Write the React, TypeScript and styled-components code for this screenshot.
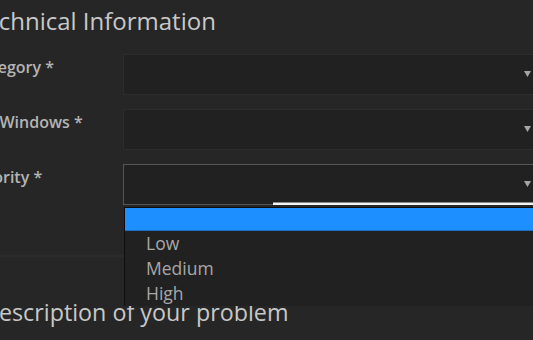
import React from "react";
import styled, { createGlobalStyle } from "styled-components";

const GlobalStyle = createGlobalStyle`
  html, body {
    margin: 0;
    padding: 0;
    background: #262626;
    overflow: hidden;
  }
  body {
    font-family: "Open Sans", "Noto Sans", sans-serif;
  }
`;

const Page = styled.div`
  width: 620px;
  margin-left: -28px;
  display: flex;
  flex-direction: column;
`;

const Heading = styled.h2`
  margin: 0;
  padding-top: 3px;
  font-size: 24px;
  font-weight: 400;
  line-height: 36px;
  color: #c8c8c8;
  height: 54px;
  box-sizing: border-box;
`;

const Fields = styled.div`
  display: flex;
  flex-direction: column;
  gap: 14px;
`;

const Row = styled.div`
  display: flex;
  align-items: flex-start;
`;

const Label = styled.label`
  width: 151px;
  flex: none;
  padding-top: 2px;
  font-size: 16px;
  font-weight: 600;
  line-height: 22px;
  color: #b4b4b4;
`;

const SelectBox = styled.div<{ $focused?: boolean }>`
  position: relative;
  flex: none;
  width: 416px;
  height: 41px;
  box-sizing: border-box;
  background: #212121;
  border: 1px solid ${(p) => (p.$focused ? "#555" : "#2c2c2c")};
`;

const Arrow = styled.svg`
  position: absolute;
  right: 7px;
  top: 16px;
`;

const FocusLine = styled.div`
  position: absolute;
  left: 149px;
  right: -2px;
  bottom: -1px;
  height: 2px;
  background: #f4f4f4;
  border-top: 1px solid #888;
`;

const Menu = styled.ul`
  position: absolute;
  top: 42px;
  left: 0;
  right: -1px;
  margin: 0;
  padding: 0;
  list-style: none;
  background: #212121;
  border-left: 1px solid #0e0e0e;
  border-top: 1px solid #0e0e0e;
  z-index: 2;
`;

const Option = styled.li<{ $active?: boolean }>`
  height: ${(p) => (p.$active ? "22px" : "25px")};
  padding-left: 21px;
  font-size: 17.5px;
  line-height: 25px;
  color: #a8a8a8;
  background: ${(p) => (p.$active ? "#1e8fff" : "transparent")};
  border-bottom: ${(p) => (p.$active ? "1px solid #1b6fc4" : "none")};
`;

const Divider = styled.hr`
  margin: 50px 0 0;
  border: none;
  border-top: 2px solid #2b2b2b;
`;

const SubHeading = styled.h2`
  margin: 37px 0 0 10px;
  font-size: 23.3px;
  font-weight: 400;
  line-height: 36px;
  color: #c8c8c8;
`;

function DownArrow() {
  return (
    <Arrow width="7" height="6" viewBox="0 0 7 6">
      <path d="M0 0 H7 L3.5 6 Z" fill="#a5a5a5" />
    </Arrow>
  );
}

export default function App() {
  return (
    <>
      <GlobalStyle />
      <Page>
        <Heading>Technical Information</Heading>
        <Fields>
          <Row>
            <Label>Category *</Label>
            <SelectBox>
              <DownArrow />
            </SelectBox>
          </Row>
          <Row>
            <Label>My Windows *</Label>
            <SelectBox>
              <DownArrow />
            </SelectBox>
          </Row>
          <Row>
            <Label>Priority *</Label>
            <SelectBox $focused>
              <DownArrow />
              <FocusLine />
              <Menu>
                <Option $active>&nbsp;</Option>
                <Option>Low</Option>
                <Option>Medium</Option>
                <Option>High</Option>
              </Menu>
            </SelectBox>
          </Row>
        </Fields>
        <Divider />
        <SubHeading>Description of your problem</SubHeading>
      </Page>
    </>
  );
}
